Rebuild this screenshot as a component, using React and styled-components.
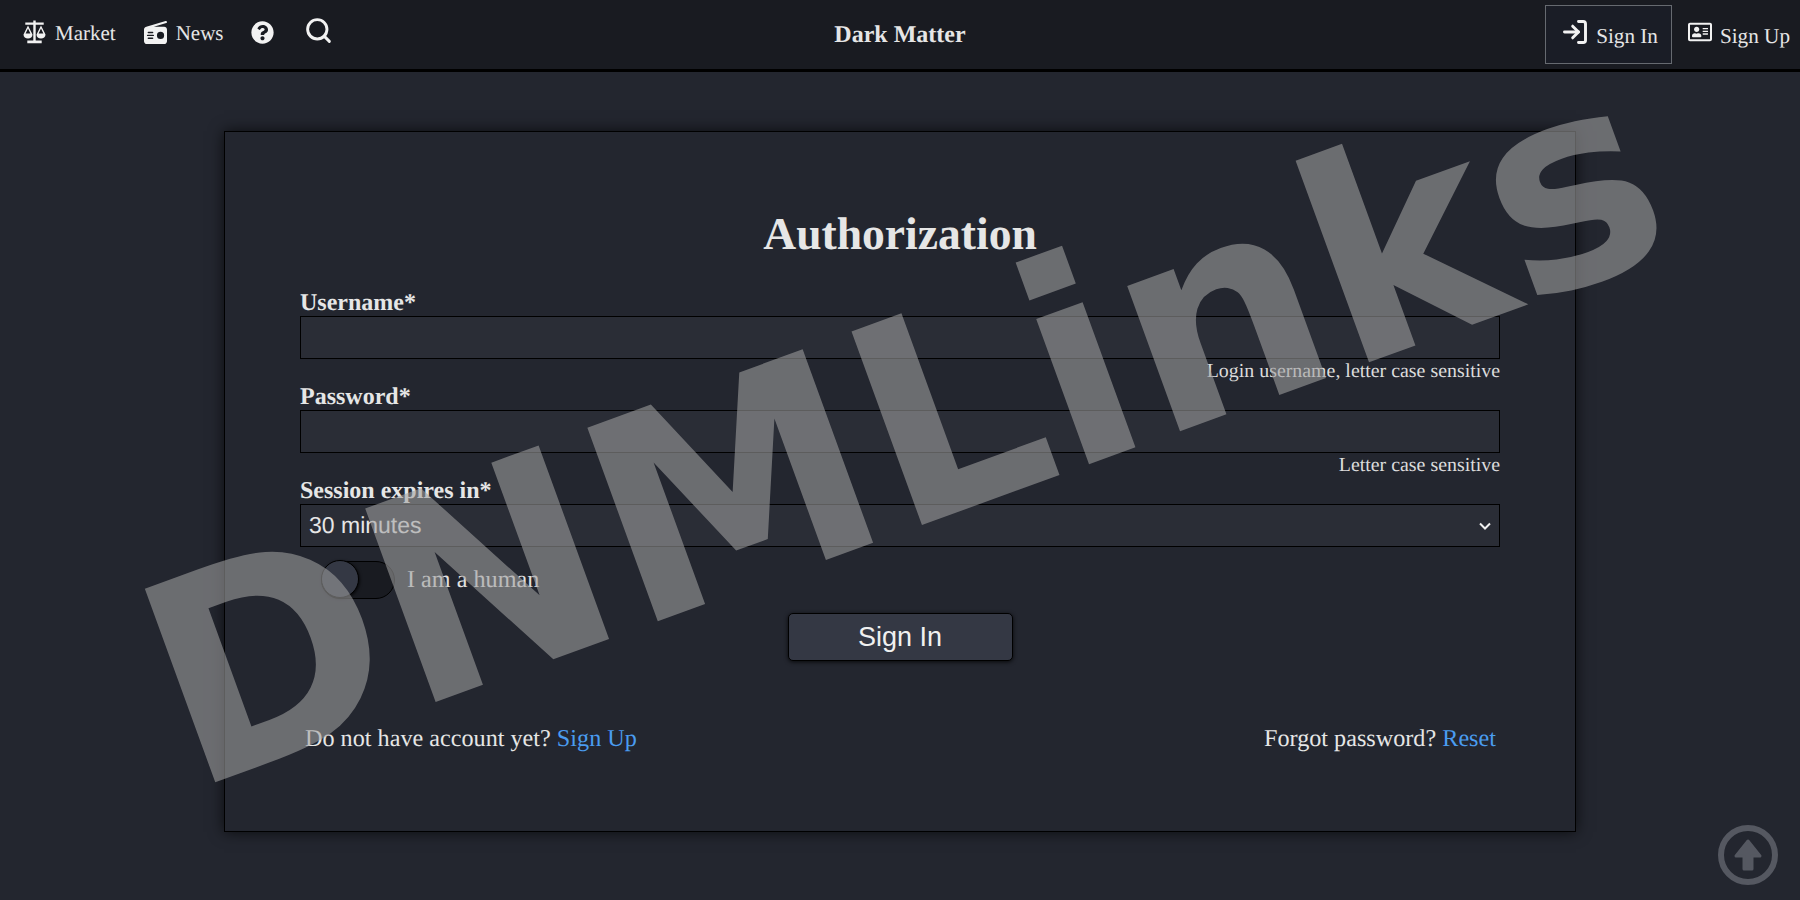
import React from "react";
import styled, { createGlobalStyle } from "styled-components";
import { FaQuestionCircle, FaRegAddressCard } from "react-icons/fa";
import { FaRadio } from "react-icons/fa6";
import { LogIn, Search } from "lucide-react";

const GlobalStyle = createGlobalStyle`
  html, body {
    margin: 0;
    padding: 0;
    background: #23262f;
    color: #e6e6e6;
    font-family: "Liberation Serif", serif;
    text-rendering: geometricPrecision;
    overflow: hidden;
  }
  * { box-sizing: border-box; }
`;

const Page = styled.div`
  position: relative;
  width: 1800px;
  height: 900px;
  overflow: hidden;
`;

const Navbar = styled.nav`
  display: grid;
  grid-template-columns: 1fr auto 1fr;
  align-items: flex-start;
  height: 72px;
  background: #191b21;
  border-bottom: 3px solid #000;
`;

const NavLeft = styled.div`
  display: flex;
  align-items: center;
  padding: 18px 0 0 23px;
`;

const NavRight = styled.div`
  display: flex;
  justify-content: flex-end;
  align-items: flex-start;
  padding-top: 5px;
`;

const NavItem = styled.a`
  display: flex;
  align-items: center;
  gap: 9px;
  margin-right: ${(p) => p.$gap || 0}px;
  font-size: 21px;
  line-height: 30px;
  color: #e6e6e6;
  svg { display: block; color: #f2f2f2; margin-top: ${(p) => p.$lift || -2}px; }
`;

const AuthItem = styled.a`
  display: flex;
  align-items: center;
  gap: ${(p) => (p.$active ? 7 : 8)}px;
  height: 59px;
  padding: ${(p) => (p.$active ? "0 13px 0 15px" : "0 10px 0 16px")};
  font-size: 21.2px;
  color: #e6e6e6;
  border: 1px solid ${(p) => (p.$active ? "#666a70" : "transparent")};
  border-width: ${(p) => (p.$active ? "1px" : "0")};
  background: ${(p) => (p.$active ? "#1a1d26" : "transparent")};
  svg { display: block; color: #f2f2f2; margin-top: -6px; }
  span { margin-top: 4px; }
`;

const Brand = styled.div`
  padding-top: 21px;
  font-size: 24px;
  line-height: 28px;
  font-weight: 700;
  color: #e6e6e6;
`;

const Main = styled.main`
  display: flex;
  justify-content: center;
  padding-top: 59px;
`;

const Card = styled.section`
  width: 1352px;
  height: 701px;
  padding: 79px 75px 0;
  background: #23262f;
  border: 1px solid #000;
  box-shadow: 0 0 14px rgba(0, 0, 0, 0.7);
`;

const Title = styled.h1`
  margin: 0 0 32px;
  text-align: center;
  font-size: 45.6px;
  line-height: 46px;
  font-weight: 700;
  color: #e6e6e6;
`;

const Field = styled.div`
  display: flex;
  flex-direction: column;
`;

const Label = styled.label`
  padding-top: 2px;
  font-size: 24px;
  line-height: 25px;
  font-weight: 700;
  color: #e6e6e6;
`;

const Input = styled.input`
  width: 100%;
  height: 43px;
  background: #2a2d36;
  border: 1px solid #000;
  outline: none;
`;

const SelectBox = styled.div`
  display: flex;
  justify-content: space-between;
  align-items: center;
  width: 100%;
  height: 43px;
  padding: 0 6px 0 8px;
  background: #2a2d36;
  border: 1px solid #000;
  font-family: "Liberation Sans", sans-serif;
  font-size: 23px;
  color: #e6e6e6;
  svg { display: block; }
`;

const Hint = styled.div`
  height: 24px;
  text-align: right;
  font-size: 19.9px;
  line-height: 24px;
  color: #dcdcdc;
`;

const ToggleRow = styled.div`
  display: flex;
  align-items: center;
  gap: 12px;
  margin: 14px 0 0 21px;
  font-size: 24.2px;
  color: #e0e0e0;
`;

const Toggle = styled.div`
  position: relative;
  width: 74px;
  height: 38px;
  background: #191b21;
  border: 1px solid #000;
  border-radius: 19px;
`;

const Knob = styled.div`
  position: absolute;
  top: -2px;
  left: -1px;
  width: 38px;
  height: 38px;
  border-radius: 50%;
  background: #343844;
  border: 1px solid #000;
  box-shadow: 1px 1px 3px rgba(0, 0, 0, 0.7);
`;

const SubmitRow = styled.div`
  display: flex;
  justify-content: center;
  margin-top: 14px;
`;

const Submit = styled.button`
  width: 225px;
  height: 48px;
  background: #343844;
  border: 1px solid #000;
  border-radius: 5px;
  box-shadow: 0 1px 4px rgba(0, 0, 0, 0.8);
  font-family: "Liberation Sans", sans-serif;
  font-size: 27px;
  color: #f0f0f0;
`;

const FooterLinks = styled.div`
  display: flex;
  justify-content: space-between;
  margin-top: 63px;
  padding: 0 4px 0 5px;
  font-size: 24.2px;
  line-height: 30px;
  color: #e6e6e6;
`;

const Link = styled.a`
  color: #4a9cf0;
`;

const Watermark = styled.div`
  position: absolute;
  left: 903px;
  top: 429px;
  transform: translate(-50%, -50%) rotate(-20deg);
  font-family: "DejaVu Sans", sans-serif;
  font-weight: 700;
  font-size: 282.5px;
  line-height: 1;
  white-space: nowrap;
  color: rgba(161, 161, 160, 0.58);
  pointer-events: none;
`;

const ScrollTop = styled.a`
  position: absolute;
  right: 22px;
  bottom: 15px;
  width: 60px;
  height: 60px;
  svg { display: block; }
`;

const ScaleIcon = () => (
  <svg width="23" height="24" viewBox="0 0 23 24" fill="currentColor">
    <path d="M10.3 0.5h2.4v2h8v2.2h-8V20.5h6v2.8H4.3v-2.8h6V4.7h-8V2.5h8z" />
    <path d="M5 5.5L0.5 14.5c0 2.6 2 4 4.5 4s4.5-1.4 4.5-4zM5 8.5L2.6 13.6h4.8z" fillRule="evenodd" />
    <path d="M18 5.5l-4.5 9c0 2.6 2 4 4.5 4s4.5-1.4 4.5-4zM18 8.5l-2.4 5.1h4.8z" fillRule="evenodd" />
  </svg>
);

export default function App() {
  return (
    <Page>
      <GlobalStyle />
      <Navbar>
        <NavLeft>
          <NavItem $gap={28}><ScaleIcon />Market</NavItem>
          <NavItem $gap={28}><FaRadio size={23} />News</NavItem>
          <NavItem $gap={30}><FaQuestionCircle size={23} /></NavItem>
          <NavItem $lift={-6}><Search size={29} strokeWidth={2.4} /></NavItem>
        </NavLeft>
        <Brand>Dark Matter</Brand>
        <NavRight>
          <AuthItem $active><LogIn size={28} strokeWidth={2.5} /><span>Sign In</span></AuthItem>
          <AuthItem><FaRegAddressCard size={24} /><span>Sign Up</span></AuthItem>
        </NavRight>
      </Navbar>
      <Main>
        <Card>
          <Title>Authorization</Title>
          <Field>
            <Label>Username*</Label>
            <Input />
            <Hint>Login username, letter case sensitive</Hint>
          </Field>
          <Field>
            <Label>Password*</Label>
            <Input type="password" />
            <Hint>Letter case sensitive</Hint>
          </Field>
          <Field>
            <Label>Session expires in*</Label>
            <SelectBox>
              30 minutes
              <svg width="16" height="16" viewBox="0 0 16 16" fill="none" stroke="#f0f0f0" strokeWidth="2">
                <path d="M3 5.5l5 5 5-5" />
              </svg>
            </SelectBox>
          </Field>
          <ToggleRow>
            <Toggle><Knob /></Toggle>
            I am a human
          </ToggleRow>
          <SubmitRow><Submit>Sign In</Submit></SubmitRow>
          <FooterLinks>
            <span>Do not have account yet? <Link>Sign Up</Link></span>
            <span>Forgot password? <Link>Reset</Link></span>
          </FooterLinks>
        </Card>
      </Main>
      <Watermark>DNMLinks</Watermark>
      <ScrollTop>
        <svg width="60" height="60" viewBox="0 0 60 60" fill="none">
          <circle cx="30" cy="30" r="27" stroke="#555861" strokeWidth="6" />
          <path d="M30 16L42 31H34V44H26V31H18Z" fill="#555861" stroke="#555861" strokeWidth="3" strokeLinejoin="round" />
        </svg>
      </ScrollTop>
    </Page>
  );
}
